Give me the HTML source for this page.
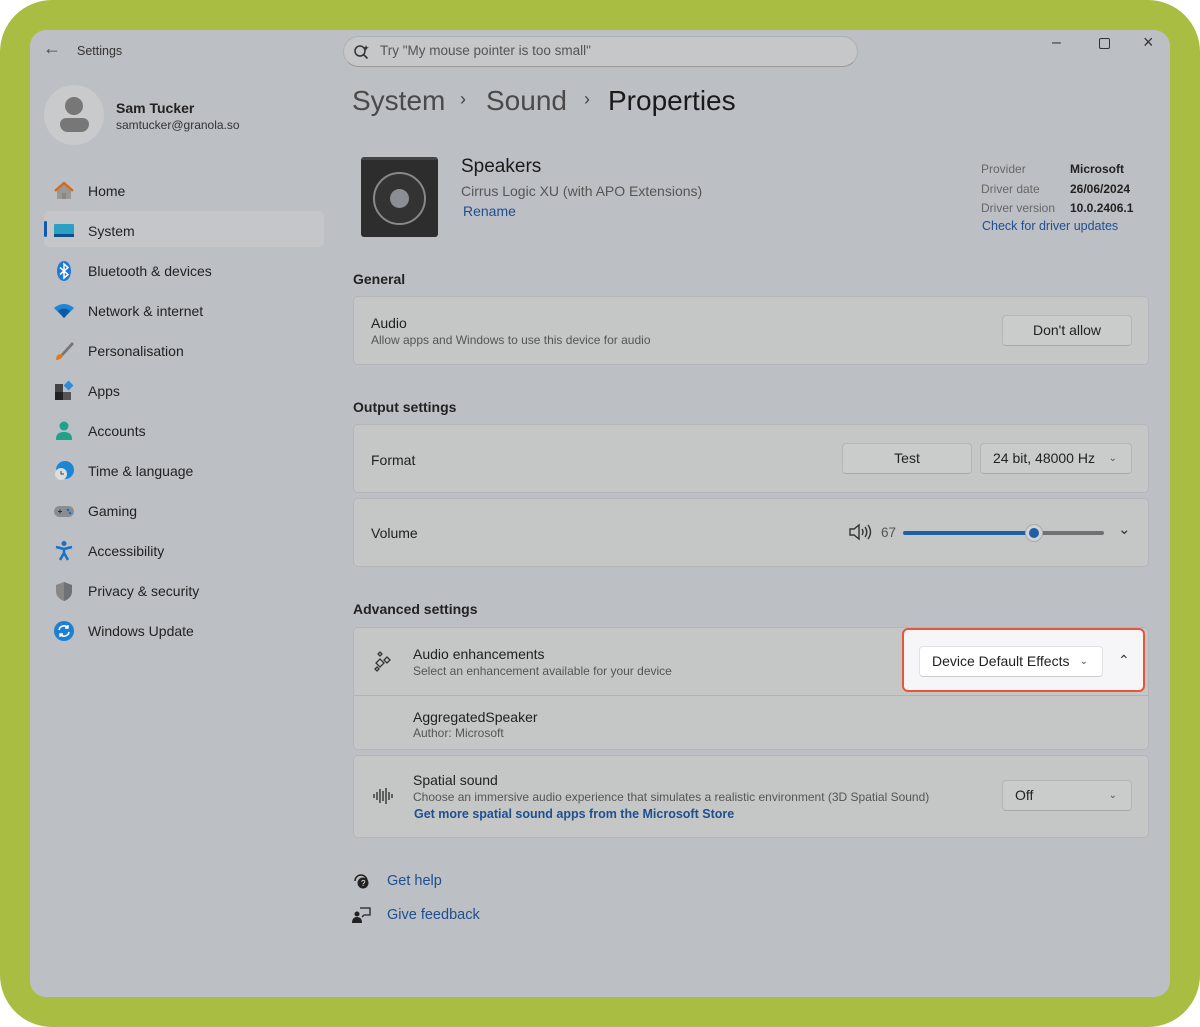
<!DOCTYPE html>
<html><head><meta charset="utf-8"><style>
*{box-sizing:border-box;margin:0;padding:0}
body{width:1200px;height:1027px;background:#fff;font-family:"Liberation Sans",sans-serif;color:#1f1f1f;position:relative;overflow:hidden}
.green{position:absolute;left:0;top:0;width:1200px;height:1027px;background:#a9bd42;border-radius:52px}
.win{position:absolute;left:30px;top:30px;width:1140px;height:967px;background:#bcbfc4;border-radius:16px;overflow:hidden}
.a{position:absolute;white-space:nowrap}
.card{position:absolute;background:#c5c7c7;border:1px solid #b3b6b9;border-radius:5px}
.btn{position:absolute;background:#cacbcb;border:1px solid #b3b5b7;border-bottom-color:#a7a9ab;border-radius:4px;font-size:14px;color:#222}
.nav{position:absolute;left:28px;font-size:14px;color:#222;white-space:nowrap;width:250px;height:22px}
.nav .ic{position:absolute;left:-5px;top:-2px;width:22px;height:22px}
.nav span{position:absolute;left:30px;top:1px}
.sub{font-size:12px;color:#555}
.link{color:#1f4f8f}
</style></head><body>
<div class="green"></div>
<div class="win">
<!-- top bar -->
<div class="a" style="left:13px;top:8px;font-size:18px;color:#444">&#8592;</div>
<div class="a" style="left:47px;top:14px;font-size:12.5px;color:#333">Settings</div>
<div class="a" style="left:313px;top:6px;width:515px;height:31px;background:#c5c7c8;border:1px solid #aeb1b4;border-bottom-color:#999;border-radius:16px"></div>
<svg class="a" style="left:323px;top:13px" width="18" height="18" viewBox="0 0 18 18"><circle cx="7" cy="8" r="5" fill="none" stroke="#333" stroke-width="1.5"/><path d="M10.5 11.5l4 4" stroke="#333" stroke-width="1.6"/><path d="M13 2l.8 2 2 .8-2 .8-.8 2-.8-2-2-.8 2-.8z" fill="#333"/></svg>
<div class="a" style="left:350px;top:13px;font-size:13.5px;color:#555">Try "My mouse pointer is too small"</div>
<div class="a" style="left:1022px;top:4px;font-size:16px;color:#333">&#8211;</div>
<div class="a" style="left:1069px;top:8px;width:11px;height:11px;border:1.5px solid #333;border-radius:2px"></div>
<div class="a" style="left:1113px;top:2px;font-size:18px;color:#333">&#215;</div>
<!-- profile -->
<div class="a" style="left:14px;top:55px;width:60px;height:60px;border-radius:50%;background:#c8cacc"></div>
<div class="a" style="left:35px;top:67px;width:18px;height:18px;border-radius:50%;background:#777"></div>
<div class="a" style="left:30px;top:88px;width:29px;height:14px;border-radius:7px 7px 9px 9px;background:#777"></div>
<div class="a" style="left:86px;top:70px;font-size:14px;font-weight:bold;color:#222">Sam Tucker</div>
<div class="a" style="left:86px;top:88px;font-size:12px;color:#333">samtucker@granola.so</div>
<!-- nav -->
<div class="a" style="left:14px;top:181px;width:280px;height:36px;background:#c4c6c9;border-radius:5px"></div>
<div class="a" style="left:14px;top:191px;width:3px;height:16px;background:#0f5cae;border-radius:2px"></div>
<div class="nav" style="top:152px"><svg class="ic" viewBox="0 0 22 22"><path d="M4 11L11 4l7 7v8H4z" fill="#999"/><path d="M2 11L11 3l9 8" fill="none" stroke="#d66a1a" stroke-width="2.5"/><rect x="9" y="13" width="4" height="6" fill="#888"/></svg><span>Home</span></div>
<div class="nav" style="top:192px"><svg class="ic" viewBox="0 0 22 22"><rect x="1" y="4" width="20" height="13" rx="1" fill="#2aa0c4"/><rect x="1" y="14" width="20" height="3" fill="#0e4f86"/></svg><span>System</span></div>
<div class="nav" style="top:232px"><svg class="ic" viewBox="0 0 22 22"><ellipse cx="11" cy="11" rx="7" ry="10" fill="#1e78d9"/><path d="M7 7.5l8 7-4 3.5V4l4 3.5-8 7" fill="none" stroke="#fff" stroke-width="1.5"/></svg><span>Bluetooth &amp; devices</span></div>
<div class="nav" style="top:272px"><svg class="ic" viewBox="0 0 22 22"><path d="M1 8q10-8 20 0l-10 10z" fill="#1d86d6"/><path d="M5 11q6-5 12 0l-6 7z" fill="#0b5aa3"/></svg><span>Network &amp; internet</span></div>
<div class="nav" style="top:312px"><svg class="ic" viewBox="0 0 22 22"><path d="M19 2L8 14l2 2L21 4z" fill="#777"/><path d="M8 14q-5 0-5 6 5 0 7-4z" fill="#e07a20"/></svg><span>Personalisation</span></div>
<div class="nav" style="top:352px"><svg class="ic" viewBox="0 0 22 22"><rect x="2" y="4" width="8" height="8" fill="#444"/><rect x="2" y="12" width="8" height="8" fill="#222"/><rect x="10" y="12" width="8" height="8" fill="#555"/><rect x="12" y="2" width="7" height="7" transform="rotate(45 15.5 5.5)" fill="#2a8ee0"/></svg><span>Apps</span></div>
<div class="nav" style="top:392px"><svg class="ic" viewBox="0 0 22 22"><circle cx="11" cy="6" r="4.5" fill="#1ca38a"/><path d="M3 19q0-7 8-7t8 7v1H3z" fill="#1ca38a"/></svg><span>Accounts</span></div>
<div class="nav" style="top:432px"><svg class="ic" viewBox="0 0 22 22"><circle cx="12" cy="10" r="9" fill="#1b86d4"/><circle cx="8" cy="14" r="6" fill="#ddd"/><path d="M8 11v3h3" stroke="#444" fill="none"/></svg><span>Time &amp; language</span></div>
<div class="nav" style="top:472px"><svg class="ic" viewBox="0 0 22 22"><rect x="1" y="6" width="20" height="11" rx="5.5" fill="#8a8d91"/><circle cx="15" cy="10" r="1.3" fill="#1d6fc2"/><circle cx="17" cy="13" r="1.3" fill="#1d6fc2"/><path d="M5 11.5h4M7 9.5v4" stroke="#333"/></svg><span>Gaming</span></div>
<div class="nav" style="top:512px"><svg class="ic" viewBox="0 0 22 22"><circle cx="11" cy="3.5" r="2.5" fill="#1a73c9"/><path d="M3 7l8 2 8-2M11 9v4l-4 7M11 13l4 7" stroke="#1a73c9" stroke-width="2.6" fill="none"/></svg><span>Accessibility</span></div>
<div class="nav" style="top:552px"><svg class="ic" viewBox="0 0 22 22"><path d="M11 2l8 3v6q0 7-8 10-8-3-8-10V5z" fill="#888"/><path d="M11 2l8 3v6q0 7-8 10z" fill="#6e7175"/></svg><span>Privacy &amp; security</span></div>
<div class="nav" style="top:592px"><svg class="ic" viewBox="0 0 22 22"><circle cx="11" cy="11" r="10" fill="#1b7fd4"/><path d="M6 10a5 5 0 0 1 9-2M16 12a5 5 0 0 1-9 2" stroke="#fff" stroke-width="1.6" fill="none"/><path d="M15 5v3h-3M7 17v-3h3" stroke="#fff" stroke-width="1.4" fill="none"/></svg><span>Windows Update</span></div>
<!-- header -->
<div class="a" style="left:322px;top:55px;font-size:28px;color:#4a4a4a">System</div>
<div class="a" style="left:430px;top:59px;font-size:18px;color:#444">&#8250;</div>
<div class="a" style="left:456px;top:55px;font-size:28px;color:#4a4a4a">Sound</div>
<div class="a" style="left:554px;top:59px;font-size:18px;color:#444">&#8250;</div>
<div class="a" style="left:578px;top:55px;font-size:28px;color:#1a1a1a">Properties</div>
<!-- speaker -->
<div class="a" style="left:331px;top:127px;width:77px;height:80px;background:#2d2d2e;border-radius:3px;border-top:3px solid #444"></div>
<div class="a" style="left:343px;top:142px;width:53px;height:53px;border-radius:50%;border:2px solid #888;background:#333"></div>
<div class="a" style="left:360px;top:159px;width:19px;height:19px;border-radius:50%;background:#8b8e92"></div>
<div class="a" style="left:431px;top:126px;font-size:19px;color:#1a1a1a">Speakers</div>
<div class="a" style="left:431px;top:153px;font-size:14px;color:#555">Cirrus Logic XU (with APO Extensions)</div>
<div class="a link" style="left:433px;top:173px;font-size:14px">Rename</div>
<div class="a" style="left:951px;top:130px;font-size:12px;color:#666;line-height:19.5px">Provider<br>Driver date<br>Driver version</div>
<div class="a" style="left:1040px;top:130px;font-size:12px;color:#222;font-weight:bold;line-height:19.5px">Microsoft<br>26/06/2024<br>10.0.2406.1</div>
<div class="a link" style="left:952px;top:189px;font-size:12.5px">Check for driver updates</div>
<!-- General -->
<div class="a" style="left:323px;top:241px;font-size:14px;font-weight:bold;color:#222">General</div>
<div class="card" style="left:323px;top:266px;width:796px;height:69px"></div>
<div class="a" style="left:341px;top:285px;font-size:14px">Audio</div>
<div class="a sub" style="left:341px;top:303px">Allow apps and Windows to use this device for audio</div>
<div class="btn" style="left:972px;top:285px;width:130px;height:31px;text-align:center;line-height:29px">Don't allow</div>
<!-- Output -->
<div class="a" style="left:323px;top:369px;font-size:14px;font-weight:bold;color:#222">Output settings</div>
<div class="card" style="left:323px;top:394px;width:796px;height:69px"></div>
<div class="a" style="left:341px;top:422px;font-size:14px">Format</div>
<div class="btn" style="left:812px;top:413px;width:130px;height:31px;text-align:center;line-height:29px">Test</div>
<div class="btn" style="left:950px;top:413px;width:152px;height:31px;line-height:29px;padding-left:12px">24 bit, 48000 Hz<span style="position:absolute;right:14px;top:0;font-size:10px;color:#555">&#8964;</span></div>
<div class="card" style="left:323px;top:468px;width:796px;height:69px"></div>
<div class="a" style="left:341px;top:495px;font-size:14px">Volume</div>
<svg class="a" style="left:818px;top:493px" width="24" height="18" viewBox="0 0 24 18"><path d="M2 6h4l5-4v14l-5-4H2z" fill="none" stroke="#333" stroke-width="1.4"/><path d="M14 6q2 3 0 6M17 4q3.5 5 0 10M20 2q5 7 0 14" fill="none" stroke="#333" stroke-width="1.4"/></svg>
<div class="a" style="left:851px;top:495px;font-size:13.5px;color:#555">67</div>
<div class="a" style="left:873px;top:501px;width:131px;height:4px;background:#1f5fa6;border-radius:2px"></div>
<div class="a" style="left:1004px;top:501px;width:70px;height:4px;background:#6f7174;border-radius:2px"></div>
<div class="a" style="left:995px;top:494px;width:18px;height:18px;border-radius:50%;background:#d0d2d4;border:1px solid #aaa"></div>
<div class="a" style="left:999px;top:498px;width:10px;height:10px;border-radius:50%;background:#1f5fa6"></div>
<div class="a" style="left:1088px;top:490px;font-size:15px;color:#333">&#8964;</div>
<!-- Advanced -->
<div class="a" style="left:323px;top:571px;font-size:14px;font-weight:bold;color:#222">Advanced settings</div>
<div class="card" style="left:323px;top:597px;width:796px;height:123px"></div>
<div class="a" style="left:324px;top:665px;width:794px;height:1px;background:#b0b3b6"></div>
<svg class="a" style="left:342px;top:620px" width="22" height="24" viewBox="0 0 22 24"><path d="M8 2l2 2-2 2-2-2z M15 7l3 3-3 3-3-3z M8 9l4 4-4 4-4-4z M5 17l2 2-2 2-2-2z" fill="none" stroke="#333" stroke-width="1.3"/></svg>
<div class="a" style="left:383px;top:616px;font-size:14px">Audio enhancements</div>
<div class="a sub" style="left:383px;top:634px">Select an enhancement available for your device</div>
<div class="a" style="left:872px;top:598px;width:243px;height:64px;background:#f6f6f8;border:2px solid #e8553a;border-radius:6px"></div>
<div class="a" style="left:889px;top:616px;width:184px;height:31px;background:#fff;border:1px solid #e2e2e4;border-bottom-color:#ccc;border-radius:4px;font-size:14px;line-height:29px;padding-left:12px;color:#222">Device Default Effects<span style="position:absolute;right:14px;top:0;font-size:10px;color:#555">&#8964;</span></div>
<div class="a" style="left:1088px;top:622px;font-size:14px;color:#333">&#8963;</div>
<div class="a" style="left:383px;top:679px;font-size:14px">AggregatedSpeaker</div>
<div class="a sub" style="left:383px;top:696px">Author: Microsoft</div>
<div class="card" style="left:323px;top:725px;width:796px;height:83px"></div>
<svg class="a" style="left:342px;top:757px" width="22" height="18" viewBox="0 0 22 18"><path d="M2 7v4M5 5v8M8 2v14M11 4v10M14 1v16M17 5v8M20 7v4" stroke="#333" stroke-width="1.4"/></svg>
<div class="a" style="left:383px;top:742px;font-size:14px">Spatial sound</div>
<div class="a sub" style="left:383px;top:760px">Choose an immersive audio experience that simulates a realistic environment (3D Spatial Sound)</div>
<div class="a link" style="left:384px;top:777px;font-size:12.5px;font-weight:bold">Get more spatial sound apps from the Microsoft Store</div>
<div class="btn" style="left:972px;top:750px;width:130px;height:31px;line-height:29px;padding-left:12px">Off<span style="position:absolute;right:14px;top:0;font-size:10px;color:#555">&#8964;</span></div>
<!-- help -->
<svg class="a" style="left:322px;top:842px" width="20" height="18" viewBox="0 0 20 18"><path d="M3 9a6 6 0 0 1 12 0" fill="none" stroke="#222" stroke-width="1.5"/><circle cx="11" cy="11" r="5.5" fill="#222"/><text x="9" y="14" font-size="8" fill="#fff" font-family="Liberation Sans">?</text></svg>
<div class="a link" style="left:357px;top:843px;font-size:14.5px">Get help</div>
<svg class="a" style="left:322px;top:876px" width="20" height="18" viewBox="0 0 20 18"><circle cx="5" cy="8" r="2.5" fill="#222"/><path d="M0 17q0-6 5-6t5 6z" fill="#222"/><path d="M8 2h10v7h-6l-2 2" fill="none" stroke="#222" stroke-width="1.3"/></svg>
<div class="a link" style="left:357px;top:877px;font-size:14.5px">Give feedback</div>
</div>
</body></html>
